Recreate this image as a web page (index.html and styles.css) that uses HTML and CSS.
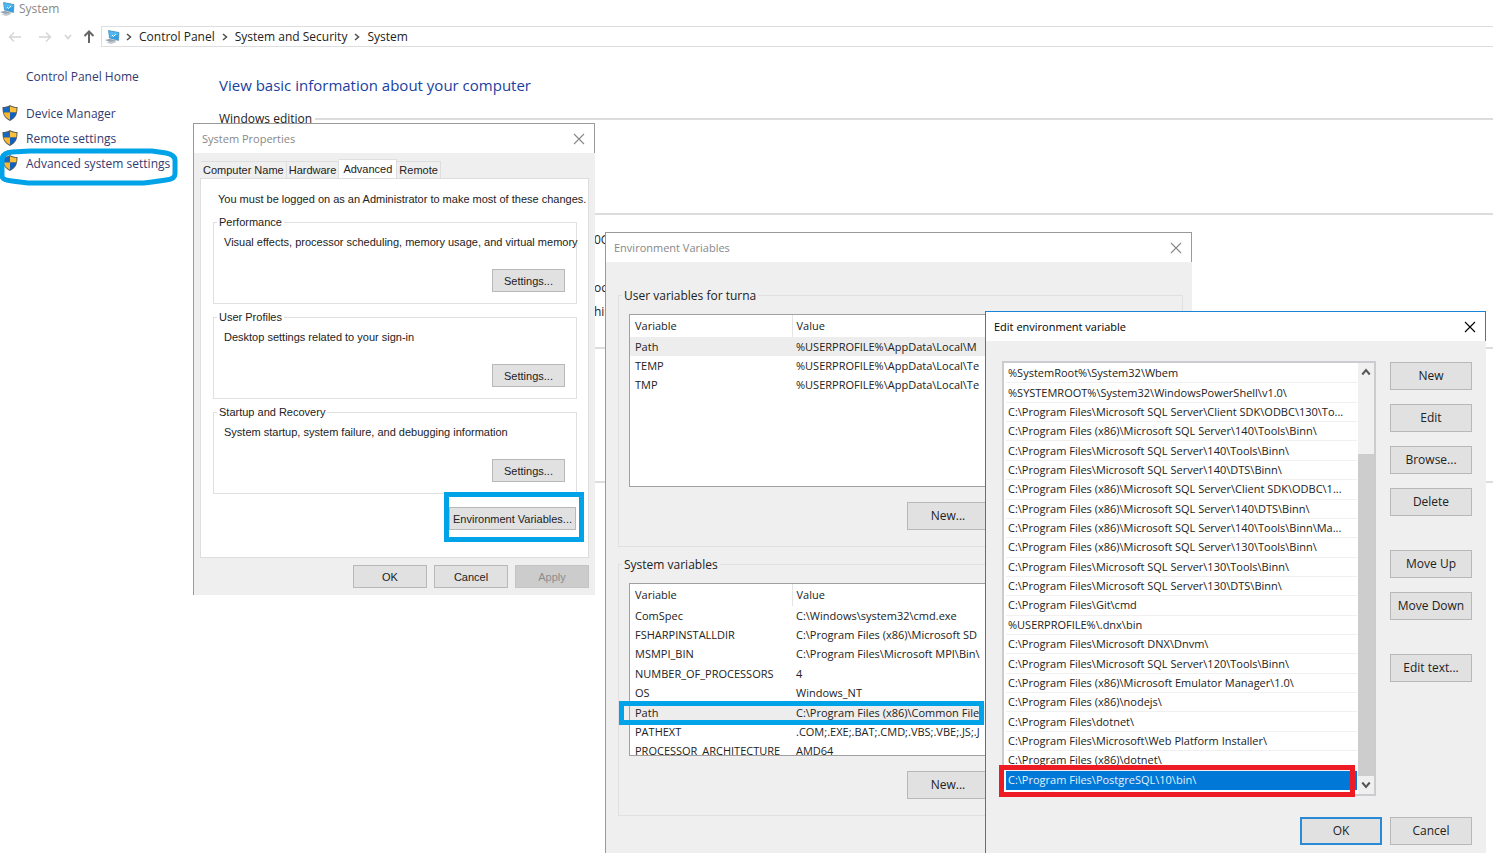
FILE: index.html
```
<!DOCTYPE html>
<html lang="en">

<head>
  <meta charset="UTF-8">
  <meta name="viewport" content="width=device-width, initial-scale=1.0">
  <title>System</title>
  <link rel="stylesheet" href="styles.css">
</head>

<body>
  <!-- shared icons -->
  <svg class="sprite" aria-hidden="true">
    <symbol id="icon-computer" viewBox="0 0 16 16">
      <path d="M0 11 L5 9.800 L12 12 L6 13.500 Z" fill="#98a4ad" />
      <path d="M1 13.500 L8 12.300 L11 13.500 L6 15 Z" fill="#c3cad0" />
      <path d="M3.500 1.500 L14 3.500 L13.500 11.500 L4.500 9 Z" fill="#2f9fe6" />
      <path d="M3.500 1.500 L14 3.500 L13.800 5.500 L4.500 9 Z" fill="#4fb8f2" />
      <path d="M3.500 1.500 L14 3.500 L13.500 11.500 L4.500 9 Z" fill="none" stroke="#4c86a8" stroke-width=".6" />
      <path d="M7 6 L8.500 7.500 L11 5" fill="none" stroke="#fff" />
    </symbol>
    <symbol id="icon-shield" viewBox="0 0 16 16">
      <path d="M8 0 C6 1.500 3 2 .5 2 C.4 9 2 13 8 16 C14 13 15.600 9 15.500 2 C13 2 10 1.500 8 0 Z" fill="#555b60" />
      <path d="M8 1.300 C6 2.500 4 3 1.500 3 L1.700 7.500 H8 Z" fill="#1668c7" />
      <path d="M8 1.300 C10 2.500 12 3 14.500 3 L14.300 7.500 H8 Z" fill="#fdc137" />
      <path d="M1.700 7.500 H8 V14.800 C4 12.800 2.200 10.500 1.700 7.500 Z" fill="#fdb92c" />
      <path d="M14.300 7.500 H8 V14.800 C12 12.800 13.800 10.500 14.300 7.500 Z" fill="#1260bd" />
    </symbol>
    <symbol id="icon-close" viewBox="0 0 12 12">
      <path d="M1 1 L11 11 M11 1 L1 11" fill="none" stroke="currentColor" stroke-width="1.100" />
    </symbol>
    <symbol id="icon-chevron" viewBox="0 0 8 8">
      <path d="M2 1 L5.500 4 L2 7" fill="none" stroke="currentColor" stroke-width="1.600" />
    </symbol>
    <symbol id="icon-arrow" viewBox="0 0 14 12">
      <path d="M13 6 H1.500 M6 1.500 L1.500 6 L6 10.500" fill="none" stroke="currentColor" />
    </symbol>
  </svg>

  <div id="system">
    <header class="system-title">
      <svg class="icon"><use href="#icon-computer" /></svg>
      <span>System</span>
    </header>

    <nav class="address-row">
      <button class="nav-button" aria-label="Back"><svg><use href="#icon-arrow" /></svg></button>
      <button class="nav-button forward" aria-label="Forward"><svg><use href="#icon-arrow" /></svg></button>
      <button class="nav-button recent" aria-label="Recent"><svg><use href="#icon-chevron" /></svg></button>
      <button class="nav-button up" aria-label="Up"><svg><use href="#icon-arrow" /></svg></button>
      <div class="address">
        <svg class="icon"><use href="#icon-computer" /></svg>
        <svg class="chevron"><use href="#icon-chevron" /></svg>
        <a href="#">Control Panel</a>
        <svg class="chevron"><use href="#icon-chevron" /></svg>
        <a href="#">System and Security</a>
        <svg class="chevron"><use href="#icon-chevron" /></svg>
        <a href="#">System</a>
      </div>
    </nav>

    <div class="system-body">
      <aside>
        <a class="home" href="#">Control Panel Home</a>
        <ul class="tasks">
          <li><svg class="icon"><use href="#icon-shield" /></svg><a href="#">Device Manager</a></li>
          <li><svg class="icon"><use href="#icon-shield" /></svg><a href="#">Remote settings</a></li>
          <li><svg class="icon"><use href="#icon-shield" /></svg><a href="#">Advanced system settings</a>
            <svg class="mark-round" viewBox="0 0 178 38">
              <path d="M12 4 L30 3 H152 L166 5 Q175 7 175 12 V26 Q175 31 166 32 L152 34 L144 35 H28 L12 33 Q2 32 2 28 V12 Q2 5 12 4 Z" />
            </svg>
          </li>
        </ul>
      </aside>

      <main>
        <h1>View basic information about your computer</h1>
        <section class="edition">
          <h2>Windows edition</h2>
        </section>
        <section class="details">
          <p class="cpu">0G</p>
          <p class="type">oc</p>
          <p>his</p>
        </section>
        <section class="details"></section>
        <section class="details"></section>
      </main>
    </div>
  </div>

  <!-- System Properties -->
  <div class="window" id="properties">
    <header class="titlebar">
      <span>System Properties</span>
      <button class="close" aria-label="Close"><svg><use href="#icon-close" /></svg></button>
    </header>
    <div class="properties-body">
      <div class="tabs" role="tablist">
        <button role="tab">Computer Name</button>
        <button role="tab">Hardware</button>
        <button role="tab" class="active" aria-selected="true">Advanced</button>
        <button role="tab">Remote</button>
      </div>
      <div class="tab-panel">
        <p class="notice">You must be logged on as an Administrator to make most of these changes.</p>
        <div class="group">
          <h3>Performance</h3>
          <p>Visual effects, processor scheduling, memory usage, and virtual memory</p>
          <button class="button">Settings...</button>
        </div>
        <div class="group">
          <h3>User Profiles</h3>
          <p>Desktop settings related to your sign-in</p>
          <button class="button">Settings...</button>
        </div>
        <div class="group">
          <h3>Startup and Recovery</h3>
          <p>System startup, system failure, and debugging information</p>
          <button class="button">Settings...</button>
        </div>
        <div class="env-row">
          <button class="button">Environment Variables...</button>
          <span class="mark"></span>
        </div>
      </div>
      <footer>
        <button class="button">OK</button>
        <button class="button">Cancel</button>
        <button class="button" disabled>Apply</button>
      </footer>
    </div>
  </div>

  <!-- Environment Variables -->
  <div class="window" id="variables">
    <header class="titlebar">
      <span>Environment Variables</span>
      <button class="close" aria-label="Close"><svg><use href="#icon-close" /></svg></button>
    </header>
    <div class="variables-body">
      <div class="group">
        <h3>User variables for turna</h3>
        <div class="table-box">
          <table class="user-table">
            <thead>
              <tr><th>Variable</th><th>Value</th></tr>
            </thead>
            <tbody>
              <tr class="selected"><td>Path</td><td>%USERPROFILE%\AppData\Local\M</td></tr>
              <tr><td>TEMP</td><td>%USERPROFILE%\AppData\Local\Te</td></tr>
              <tr><td>TMP</td><td>%USERPROFILE%\AppData\Local\Te</td></tr>
            </tbody>
          </table>
        </div>
        <div class="group-buttons"><button class="button">New...</button></div>
      </div>
      <div class="group">
        <h3>System variables</h3>
        <div class="table-box">
          <table class="system-table">
            <thead>
              <tr><th>Variable</th><th>Value</th></tr>
            </thead>
            <tbody>
              <tr><td>ComSpec</td><td>C:\Windows\system32\cmd.exe</td></tr>
              <tr><td>FSHARPINSTALLDIR</td><td>C:\Program Files (x86)\Microsoft SD</td></tr>
              <tr><td>MSMPI_BIN</td><td>C:\Program Files\Microsoft MPI\Bin\</td></tr>
              <tr><td>NUMBER_OF_PROCESSORS</td><td>4</td></tr>
              <tr><td>OS</td><td>Windows_NT</td></tr>
              <tr class="selected"><td>Path</td><td>C:\Program Files (x86)\Common File</td></tr>
              <tr><td>PATHEXT</td><td>.COM;.EXE;.BAT;.CMD;.VBS;.VBE;.JS;.J</td></tr>
              <tr><td>PROCESSOR_ARCHITECTURE</td><td>AMD64</td></tr>
            </tbody>
          </table>
        </div>
        <span class="mark"></span>
        <div class="group-buttons"><button class="button">New...</button></div>
      </div>
    </div>
  </div>

  <!-- Edit environment variable -->
  <div class="window" id="edit">
    <header class="titlebar">
      <span>Edit environment variable</span>
      <button class="close" aria-label="Close"><svg><use href="#icon-close" /></svg></button>
    </header>
    <div class="edit-body">
      <div class="path-box">
        <ul class="paths">
          <li>%SystemRoot%\System32\Wbem</li>
          <li>%SYSTEMROOT%\System32\WindowsPowerShell\v1.0\</li>
          <li>C:\Program Files\Microsoft SQL Server\Client SDK\ODBC\130\To...</li>
          <li>C:\Program Files (x86)\Microsoft SQL Server\140\Tools\Binn\</li>
          <li>C:\Program Files\Microsoft SQL Server\140\Tools\Binn\</li>
          <li>C:\Program Files\Microsoft SQL Server\140\DTS\Binn\</li>
          <li>C:\Program Files (x86)\Microsoft SQL Server\Client SDK\ODBC\1...</li>
          <li>C:\Program Files (x86)\Microsoft SQL Server\140\DTS\Binn\</li>
          <li>C:\Program Files (x86)\Microsoft SQL Server\140\Tools\Binn\Ma...</li>
          <li>C:\Program Files (x86)\Microsoft SQL Server\130\Tools\Binn\</li>
          <li>C:\Program Files\Microsoft SQL Server\130\Tools\Binn\</li>
          <li>C:\Program Files\Microsoft SQL Server\130\DTS\Binn\</li>
          <li>C:\Program Files\Git\cmd</li>
          <li>%USERPROFILE%\.dnx\bin</li>
          <li>C:\Program Files\Microsoft DNX\Dnvm\</li>
          <li>C:\Program Files\Microsoft SQL Server\120\Tools\Binn\</li>
          <li>C:\Program Files (x86)\Microsoft Emulator Manager\1.0\</li>
          <li>C:\Program Files (x86)\nodejs\</li>
          <li>C:\Program Files\dotnet\</li>
          <li>C:\Program Files\Microsoft\Web Platform Installer\</li>
          <li>C:\Program Files (x86)\dotnet\</li>
          <li class="selected">C:\Program Files\PostgreSQL\10\bin\</li>
        </ul>
        <div class="scrollbar">
          <svg class="up"><use href="#icon-chevron" /></svg>
          <div class="thumb"></div>
          <svg class="down"><use href="#icon-chevron" /></svg>
        </div>
        <span class="mark"></span>
      </div>
      <div class="actions">
        <button class="button">New</button>
        <button class="button">Edit</button>
        <button class="button">Browse...</button>
        <button class="button">Delete</button>
        <button class="button spaced">Move Up</button>
        <button class="button">Move Down</button>
        <button class="button spaced">Edit text...</button>
      </div>
    </div>
    <footer>
      <button class="button default">OK</button>
      <button class="button">Cancel</button>
    </footer>
  </div>
</body>

</html>
```
FILE: styles.css
```
/* reset */
* {
  margin: 0;
  padding: 0;
  box-sizing: border-box;
}

ul {
  list-style: none;
}

a {
  color: inherit;
  text-decoration: none;
}

h1,
h2,
h3,
th {
  font-weight: normal;
  text-align: left;
}

button {
  font: inherit;
  color: inherit;
  border: none;
  background: none;
}

/* page */
body {
  position: relative;
  height: 100vh;
  overflow: hidden;
  background-color: #fff;
  color: #222;
  font-family: "Open Sans", "Noto Sans", sans-serif;
  font-size: 12px;
  line-height: 18px;
}

.sprite {
  display: none;
}

.icon {
  width: 16px;
  height: 16px;
  flex: none;
}

/* system window */
.system-title {
  display: flex;
  align-items: center;
  gap: 3px;
  height: 18px;
  color: #888;
}

.address-row {
  display: flex;
  align-items: center;
  height: 21px;
  margin-top: 8px;
}

.nav-button {
  display: flex;
  flex: none;
  justify-content: center;
  width: 30px;
  color: #d4d4d4;
}

.nav-button svg {
  width: 14px;
  height: 12px;
  stroke-width: 1.4;
}

.nav-button.forward svg {
  transform: rotate(180deg);
}

.nav-button.recent {
  width: 16px;
}

.nav-button.recent svg {
  width: 8px;
  height: 8px;
  transform: rotate(90deg);
}

.nav-button.up {
  width: 25px;
  color: #666;
}

.nav-button.up svg {
  stroke-width: 2;
  transform: rotate(90deg);
}

.address {
  display: flex;
  flex: 1;
  align-items: center;
  gap: 6px;
  height: 21px;
  padding-left: 3px;
  border: 1px solid #dedede;
  border-right: none;
}

.address .icon {
  margin-right: -2px;
}

.chevron {
  width: 8px;
  height: 8px;
  color: #555;
}

.system-body {
  display: flex;
}

aside {
  width: 219px;
  padding-top: 21px;
  color: #343a70;
}

.home {
  display: block;
  padding-left: 26px;
}

.tasks {
  margin-top: 15px;
}

.tasks li {
  position: relative;
  display: flex;
  align-items: center;
  gap: 8px;
  height: 25px;
  padding-left: 2px;
}

.tasks .icon {
  margin-bottom: 2px;
}

.mark-round {
  position: absolute;
  left: 0;
  top: -3px;
  width: 178px;
  height: 38px;
  fill: none;
  stroke: #00a2e8;
  stroke-width: 5;
}

main {
  flex: 1;
  padding-top: 26px;
}

h1 {
  color: #1a3fa0;
  font-size: 15px;
  line-height: 24px;
}

.edition {
  height: 103px;
  margin-top: 13px;
}

.edition h2 {
  display: flex;
  align-items: center;
  gap: 3px;
  font-size: 12px;
}

.edition h2::after {
  content: "";
  flex: 1;
  height: 2px;
  background-color: #dcdcdc;
}

.details {
  height: 134px;
  padding: 16px 0 0 375px;
  border-top: 2px solid #dcdcdc;
}

.details .cpu {
  margin-bottom: 30px;
}

.details .type {
  margin-bottom: 6px;
}

/* windows */
.window {
  position: absolute;
  display: flex;
  flex-direction: column;
  background-color: #efefef;
  border-left: 1px solid #9a9a9a;
}

.titlebar {
  display: flex;
  align-items: center;
  justify-content: space-between;
  flex: none;
  height: 30px;
  padding: 0 9px 0 8px;
  background-color: #fff;
  border: 1px solid #9a9a9a;
  border-width: 1px 1px 0 0;
  color: #888;
  font-size: 11px;
}

.close {
  display: flex;
}

.close svg {
  width: 12px;
  height: 12px;
}

.button {
  width: 82px;
  height: 28px;
  background-color: #e1e1e1;
  border: 1px solid #b8b8b8;
}

.button:disabled {
  background-color: #ccc;
  border-color: #c4c4c4;
  color: #8c8c8c;
}

.mark {
  position: absolute;
  border: 5px solid #00a2e8;
}

/* group box, its title sits on the border */
.group {
  position: relative;
  border: 1px solid #e0e0e0;
}

.group h3 {
  position: absolute;
  top: -9px;
  left: 3px;
  padding: 0 2px;
  font-size: inherit;
}

/* system properties */
#properties {
  left: 193px;
  top: 123px;
  width: 402px;
}

.properties-body {
  padding: 6px 6px 7px;
  font-family: "Liberation Sans", sans-serif;
  font-size: 11px;
  line-height: 16px;
}

.tabs {
  display: flex;
  align-items: flex-end;
  padding-left: 1px;
}

.tabs button {
  height: 17px;
  padding: 0 2px;
  border: 1px solid #dedede;
  border-width: 1px 1px 0 0;
}

.tabs .active {
  height: 19px;
  padding: 0 4px;
  background-color: #fff;
}

.tab-panel {
  height: 380px;
  padding: 12px 11px 0 12px;
  background-color: #fff;
  border: 1px solid #dedede;
}

.notice {
  padding-left: 5px;
  margin-bottom: 15px;
  white-space: nowrap;
}

#properties .group {
  height: 82px;
  margin-bottom: 13px;
  padding: 11px 11px 0 10px;
}

#properties .group h3 {
  background-color: #fff;
}

#properties .group p {
  margin-bottom: 19px;
  white-space: nowrap;
}

#properties .group .button {
  display: block;
  width: 73px;
  margin-left: auto;
}

#properties .button {
  height: 23px;
}

.env-row {
  position: relative;
  display: flex;
  justify-content: flex-end;
  padding-right: 1px;
}

.env-row .button {
  width: 127px;
}

.env-row .mark {
  right: -7px;
  top: -15px;
  width: 140px;
  height: 50px;
}

#properties footer {
  display: flex;
  justify-content: flex-end;
  gap: 7px;
  padding-top: 7px;
}

#properties footer .button {
  width: 74px;
}

/* environment variables */
#variables {
  left: 605px;
  top: 232px;
  bottom: 0;
  width: 587px;
}

.variables-body {
  padding: 33px 9px 0 12px;
}

#variables .group {
  height: 252px;
  margin-bottom: 17px;
  padding: 18px 10px 0;
}

#variables .group h3 {
  background-color: #efefef;
}

.table-box {
  height: 173px;
  overflow: hidden;
  background-color: #fff;
  border: 1px solid #a0a0a0;
  font-size: 11px;
}

table {
  width: 100%;
  table-layout: fixed;
  border-collapse: collapse;
}

th:first-child {
  width: 162px;
  border-right: 1px solid #e5e5e5;
}

th,
td {
  padding-left: 5px;
  white-space: nowrap;
}

th {
  height: 22px;
}

td:last-child,
th:last-child {
  padding-left: 4px;
}

.user-table {
  height: 80px;
}

.system-table {
  height: 177px;
}

tr.selected {
  background-color: #ededed;
}

#variables .mark {
  left: 0;
  top: 136px;
  width: 365px;
  height: 24px;
}

.group-buttons {
  display: flex;
  justify-content: flex-end;
  margin-top: 15px;
  padding-right: 183px;
}

/* edit environment variable */
#edit {
  left: 985px;
  top: 311px;
  bottom: 0;
  width: 501px;
  border-color: #1883d7;
}

#edit .titlebar {
  border-color: #1883d7;
  color: #000;
}

.edit-body {
  display: flex;
  gap: 14px;
  padding: 20px 14px 0 16px;
}

.path-box {
  position: relative;
  display: flex;
  flex: 1;
  min-width: 0;
  height: 435px;
  background-color: #fff;
  border: 2px solid #cbcbd0;
}

/* 22 rows share the height of the list */
.paths {
  display: flex;
  flex: 1;
  flex-direction: column;
  min-width: 0;
  height: 427px;
  padding: 1px 1px 0 2px;
  font-size: 11px;
}

.paths li {
  display: flex;
  flex: 1;
  align-items: center;
  padding-left: 2px;
  border-bottom: 1px solid #f0f0f0;
  white-space: nowrap;
}

.paths .selected {
  background-color: #0078d7;
  border-color: #0078d7;
  color: #e4f1fc;
}

.scrollbar {
  display: flex;
  flex: none;
  flex-direction: column;
  align-items: center;
  width: 16px;
  background-color: #f0f0f0;
  color: #555;
}

.scrollbar svg {
  width: 10px;
  height: 10px;
  margin: 4px 0;
}

.scrollbar .up {
  transform: rotate(-90deg);
}

.scrollbar .down {
  transform: rotate(90deg);
}

.thumb {
  width: 16px;
  height: 322px;
  margin-top: auto;
  background-color: #cdcdcd;
}

#edit .mark {
  left: -5px;
  top: 402px;
  width: 356px;
  height: 32px;
  border-color: #ed1c24;
}

.actions {
  display: flex;
  flex: none;
  flex-direction: column;
  gap: 14px;
  padding-top: 1px;
}

.actions .spaced {
  margin-top: 20px;
}

#edit footer {
  display: flex;
  justify-content: flex-end;
  gap: 8px;
  padding: 21px 14px 0 0;
}

.button.default {
  border: 2px solid #2a8ad6;
}
```
